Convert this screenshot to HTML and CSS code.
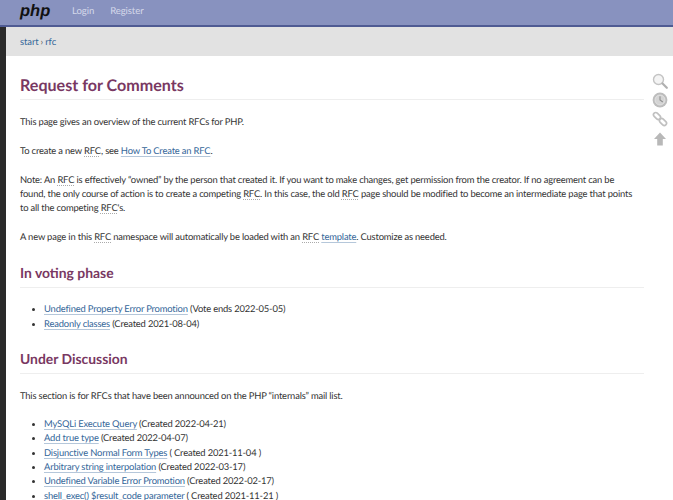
FILE: index.html
```html
<!DOCTYPE html>
<html lang="en">
<head>
<meta charset="utf-8">
<title>Request for Comments</title>
<link rel="stylesheet" href="styles.css">
</head>
<body>
<header class="topbar">
  <span class="logo">php</span>
  <nav class="topnav"><a href="#">Login</a><a href="#">Register</a></nav>
</header>
<div class="shell">
  <div class="crumbs"><a href="#">start</a> › <a href="#">rfc</a></div>
  <main class="page">
    <aside class="tools">
      <svg class="tool" viewBox="0 0 16 16"><circle cx="6.5" cy="6.5" r="5" fill="#f4f4f4" stroke="#c4c4c4" stroke-width="1.4"/><path d="M10.5 10.5l4.3 4.3" stroke="#b0b0b0" stroke-width="2.2" stroke-linecap="round"/></svg>
      <svg class="tool" viewBox="0 0 16 16"><circle cx="8" cy="8" r="7.4" fill="#bdbdbd"/><circle cx="8" cy="8" r="5" fill="#d4d4d4" stroke="#e6e6e6" stroke-width=".8"/><path d="M8 4.2V8l2.8 2" fill="none" stroke="#8f8f8f" stroke-width="1.1"/></svg>
      <svg class="tool" viewBox="0 0 16 16"><g fill="none" stroke="#c0c0c0" stroke-width="1.7"><rect x="1" y="2.8" width="8" height="4.4" rx="2.2" transform="rotate(45 5 5)"/><rect x="7" y="8.8" width="8" height="4.4" rx="2.2" transform="rotate(45 11 11)"/></g></svg>
      <svg class="tool" viewBox="0 0 16 16"><path d="M8 1.5L14 8h-3.2v6.5H5.2V8H2z" fill="#b8b8b8"/></svg>
    </aside>
    <h1>Request for Comments</h1>
    <p>This page gives an overview of the current RFCs for PHP.</p>
    <p>To create a new <abbr>RFC</abbr>, see <a href="#">How To Create an RFC</a>.</p>
    <p>Note: An <abbr>RFC</abbr> is effectively “owned” by the person that created it. If you want to make changes, get permission from the creator. If no agreement can be found, the only course of action is to create a competing <abbr>RFC</abbr>. In this case, the old <abbr>RFC</abbr> page should be modified to become an intermediate page that points to all the competing <abbr>RFC</abbr>'s.</p>
    <p>A new page in this <abbr>RFC</abbr> namespace will automatically be loaded with an <abbr>RFC</abbr> <a href="#">template</a>. Customize as needed.</p>
    <h2>In voting phase</h2>
    <ul>
      <li><a href="#">Undefined Property Error Promotion</a> (Vote ends 2022-05-05)</li>
      <li><a href="#">Readonly classes</a> (Created 2021-08-04)</li>
    </ul>
    <h2>Under Discussion</h2>
    <p>This section is for RFCs that have been announced on the PHP “internals” mail list.</p>
    <ul>
      <li><a href="#">MySQLi Execute Query</a> (Created 2022-04-21)</li>
      <li><a href="#">Add true type</a> (Created 2022-04-07)</li>
      <li><a href="#">Disjunctive Normal Form Types</a> ( Created 2021-11-04 )</li>
      <li><a href="#">Arbitrary string interpolation</a> (Created 2022-03-17)</li>
      <li><a href="#">Undefined Variable Error Promotion</a> (Created 2022-02-17)</li>
      <li><a href="#">shell_exec() $result_code parameter</a> ( Created 2021-11-21 )</li>
    </ul>
  </main>
</div>
</body>
</html>
```
FILE: styles.css
```css
html, body { margin: 0; height: 500px; overflow: hidden; }
body { background: #2a2a2a; font-family: "Lato", "Liberation Sans", sans-serif; font-size: 9.4px; letter-spacing: -0.17px; line-height: 14.3px; color: #333; text-rendering: geometricPrecision; }
.topbar { height: 25px; background: #8892bf; border-bottom: 2px solid #4f5b93; display: flex; align-items: center; padding-left: 20px; }
.logo { font-family: "Liberation Sans", sans-serif; font-weight: bold; font-style: italic; font-size: 16.5px; letter-spacing: 0; color: #111; width: 52px; padding-bottom: 2px; }
.topnav { display: flex; gap: 16px; font-size: 9.6px; letter-spacing: -0.1px; }
.topnav a { color: #d5d9ea; text-decoration: none; }
.shell { margin-left: 6px; background: #fff; height: 473px; }
.crumbs { height: 29px; background: #e2e2e2; display: flex; align-items: center; gap: 2px; padding: 4px 0 0 14px; box-sizing: border-box; color: #555; letter-spacing: -0.05px; }
.crumbs a { color: #369; text-decoration: none; }
.page { position: relative; padding: 1px 29px 0 14px; }
.tools { position: absolute; top: 17px; right: 5px; width: 16px; display: flex; flex-direction: column; gap: 3.2px; }
.tool { width: 16px; height: 16px; display: block; }
h1, h2 { color: #793862; font-weight: 700; margin: 0; border-bottom: 1px solid #eee; letter-spacing: 0; }
h1 { font-size: 16.1px; line-height: 24px; margin-top: 17px; padding-bottom: 1px; margin-bottom: 16px; }
h2 { font-size: 13.9px; line-height: 20px; margin-top: 17.5px; padding-bottom: 4px; margin-bottom: 15.5px; }
p { margin: 0 0 14.5px; padding-right: 3px; }
h2 + p { margin-bottom: 14px; }
abbr { text-decoration: underline dotted #aaa 1px; text-underline-offset: 2px; }
a { color: #369; text-decoration: underline solid #b5c7da 1px; text-underline-offset: 2px; }
ul { margin: 0 0 13.5px; padding-left: 24px; }
```
